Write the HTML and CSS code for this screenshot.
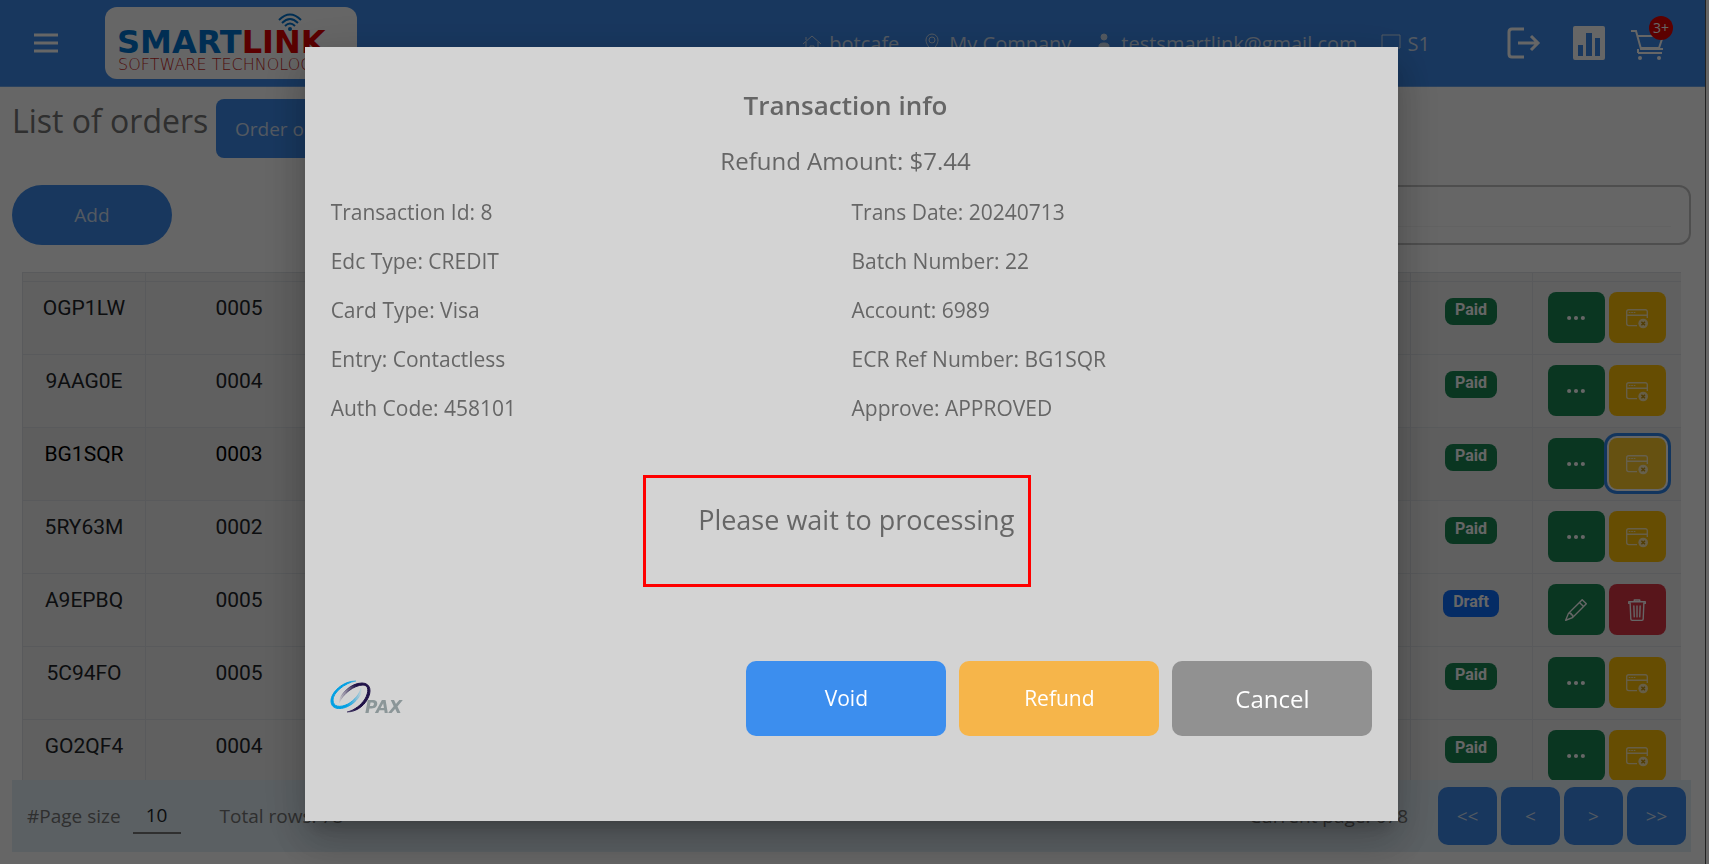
FILE: index.html
```
<!DOCTYPE html>
<html lang="en">

<head>
    <meta charset="UTF-8">
    <meta name="viewport" content="width=device-width, initial-scale=1.0">
    <title>List of orders</title>
    <link rel="stylesheet" href="styles.css">
</head>

<body>
    <!-- shared icons -->
    <svg class="sprite" aria-hidden="true">
        <symbol id="dots" viewBox="0 0 16 16">
            <path fill="currentColor" d="M3 9.5a1.5 1.5 0 1 1 0-3 1.5 1.5 0 0 1 0 3m5 0a1.5 1.5 0 1 1 0-3 1.5 1.5 0 0 1 0 3m5 0a1.5 1.5 0 1 1 0-3 1.5 1.5 0 0 1 0 3" />
        </symbol>
        <symbol id="window-x" viewBox="0 0 16 16">
            <path fill="none" stroke="currentColor" d="M8 13.5H2a1.5 1.5 0 0 1-1.500-1.500V3.500A1.500 1.500 0 0 1 2 2h12a1.500 1.500 0 0 1 1.500 1.500V8M.5 6h15" />
            <path fill="none" stroke="currentColor" stroke-width=".8" d="M2 4h5" stroke-dasharray="1.200 .6" />
            <circle cx="12.500" cy="12" r="3.500" fill="currentColor" />
            <path fill="none" stroke="#b8860b" stroke-width="1.100" d="m11.200 10.700 2.600 2.600m0-2.600-2.600 2.600" />
        </symbol>
        <symbol id="pencil" viewBox="0 0 16 16">
            <path fill="currentColor" d="M12.146.146a.5.5 0 0 1 .708 0l3 3a.5.5 0 0 1 0 .708l-10 10a.5.5 0 0 1-.168.11l-5 2a.5.5 0 0 1-.65-.65l2-5a.5.5 0 0 1 .11-.168zM11.207 2.5 13.5 4.793 14.793 3.5 12.5 1.207zm1.586 3L10.5 3.207 4 9.707V10h.5a.5.5 0 0 1 .5.5v.5h.5a.5.5 0 0 1 .5.5v.5h.293zm-9.761 5.175-.106.106-1.528 3.821 3.821-1.528.106-.106A.5.5 0 0 1 5 12.5V12h-.5a.5.5 0 0 1-.5-.5V11h-.5a.5.5 0 0 1-.468-.325" />
        </symbol>
        <symbol id="trash" viewBox="0 0 16 16">
            <path fill="none" stroke="currentColor" stroke-linecap="round" stroke-linejoin="round" d="M2 3.200V2h12v1.200M6 2V.7h4V2M3 3l.5 11.500a1 1 0 0 0 1 1h7a1 1 0 0 0 1-1L13 3M5.700 5l.3 8M8 5v8M10.300 5l-.3 8" />
        </symbol>
    </svg>

    <div class="app">
        <header class="topbar">
            <button class="icon-btn menu" aria-label="Menu">
                <svg width="26" height="20" viewBox="0 0 26 20"><path stroke="currentColor" stroke-width="3" d="M1 2h24M1 10h24M1 18h24" /></svg>
            </button>
            <a href="#" class="logo" aria-label="Smartlink">
                <svg width="252" height="72" viewBox="0 0 252 72">
                    <g fill="none" stroke="#0073cf" stroke-width="2">
                        <path d="M174 13q11-11 22 0M177 16q8-8 16 0M180 19q5-5 10 0" />
                    </g>
                    <circle cx="185" cy="22" r="2" fill="#0073cf" />
                    <text x="12" y="46" class="logo-name"><tspan fill="#0073cf">SMART</tspan><tspan fill="#e30000">LINK</tspan></text>
                    <text x="13" y="63" class="logo-sub">SOFTWARE TECHNOLOGY</text>
                </svg>
            </a>
            <nav class="info">
                <a href="#"><svg width="20" height="20" viewBox="0 0 20 20"><path d="M1 11 10 3l9 8M4 9v9h4v-5h4v5h4V9M4 7V4" /></svg>botcafe</a>
                <a href="#"><svg width="20" height="20" viewBox="0 0 20 20"><path d="M10 19C7 14 4 11 4 7a6 6 0 0 1 12 0c0 4-3 7-6 12z" /><circle cx="10" cy="7" r="3" /></svg>My Company</a>
                <a href="#"><svg width="20" height="20" viewBox="0 0 20 20"><g fill="currentColor"><circle cx="10" cy="4" r="3" /><path d="M5 17v-4q0-3 5-3t5 3v4z" /></g></svg>testsmartlink@gmail.com</a>
                <a href="#"><svg width="20" height="20" viewBox="0 0 20 20"><path d="M1 2h18v13H1zM7 18h6" /></svg>S1</a>
            </nav>
            <div class="tools">
                <button class="icon-btn" aria-label="Log out">
                    <svg width="34" height="34" viewBox="0 0 34 34" fill="none" stroke="currentColor" stroke-width="3"><path d="M17 3H5Q2 3 2 6v22q0 3 3 3h12M11 17h20M24 10l7 7-7 7" /></svg>
                </button>
                <button class="icon-btn" aria-label="Reports">
                    <svg width="32" height="34" viewBox="0 0 32 34"><path fill="currentColor" fill-rule="evenodd" d="M2 0h28q2 0 2 2v30q0 2-2 2H2q-2 0-2-2V2q0-2 2-2zM5 19v11h5V19zM13 7v23h6V7zM22 12v18h5V12z" /></svg>
                </button>
                <button class="icon-btn cart" aria-label="Cart">
                    <svg width="34" height="34" viewBox="0 0 34 34" fill="none" stroke="currentColor" stroke-width="2"><path d="M0 5h5l5 18h22M7 10h25l-4 12H10M7 27h24M7 23v4" /><g fill="currentColor" stroke="none"><circle cx="9" cy="32" r="2" /><circle cx="28" cy="32" r="2" /></g></svg>
                    <span class="count">3+</span>
                </button>
            </div>
        </header>

        <main class="content">
            <div class="heading">
                <h1>List of orders</h1>
                <button class="btn order-btn">Order online</button>
            </div>
            <div class="toolbar">
                <button class="btn add-btn">Add</button>
                <div class="search"><input type="text" aria-label="Search orders"></div>
            </div>

            <div class="table-wrap">
                <table class="orders">
                    <colgroup>
                        <col class="col-id">
                        <col class="col-number">
                        <col>
                        <col class="col-status">
                        <col class="col-actions">
                    </colgroup>
                    <thead>
                        <tr><th></th><th></th><th></th><th></th><th></th></tr>
                    </thead>
                    <tbody>
                        <tr>
                            <td>OGP1LW</td><td>0005</td><td></td>
                            <td><span class="badge paid">Paid</span></td>
                            <td><div class="actions"><button class="act green" aria-label="More"><svg><use href="#dots" /></svg></button><button class="act yellow" aria-label="Refund"><svg><use href="#window-x" /></svg></button></div></td>
                        </tr>
                        <tr>
                            <td>9AAG0E</td><td>0004</td><td></td>
                            <td><span class="badge paid">Paid</span></td>
                            <td><div class="actions"><button class="act green" aria-label="More"><svg><use href="#dots" /></svg></button><button class="act yellow" aria-label="Refund"><svg><use href="#window-x" /></svg></button></div></td>
                        </tr>
                        <tr class="selected">
                            <td>BG1SQR</td><td>0003</td><td></td>
                            <td><span class="badge paid">Paid</span></td>
                            <td><div class="actions"><button class="act green" aria-label="More"><svg><use href="#dots" /></svg></button><button class="act yellow active" aria-label="Refund"><svg><use href="#window-x" /></svg></button></div></td>
                        </tr>
                        <tr>
                            <td>5RY63M</td><td>0002</td><td></td>
                            <td><span class="badge paid">Paid</span></td>
                            <td><div class="actions"><button class="act green" aria-label="More"><svg><use href="#dots" /></svg></button><button class="act yellow" aria-label="Refund"><svg><use href="#window-x" /></svg></button></div></td>
                        </tr>
                        <tr>
                            <td>A9EPBQ</td><td>0005</td><td></td>
                            <td><span class="badge draft">Draft</span></td>
                            <td><div class="actions"><button class="act green" aria-label="Edit"><svg><use href="#pencil" /></svg></button><button class="act red" aria-label="Delete"><svg><use href="#trash" /></svg></button></div></td>
                        </tr>
                        <tr>
                            <td>5C94FO</td><td>0005</td><td></td>
                            <td><span class="badge paid">Paid</span></td>
                            <td><div class="actions"><button class="act green" aria-label="More"><svg><use href="#dots" /></svg></button><button class="act yellow" aria-label="Refund"><svg><use href="#window-x" /></svg></button></div></td>
                        </tr>
                        <tr>
                            <td>GO2QF4</td><td>0004</td><td></td>
                            <td><span class="badge paid">Paid</span></td>
                            <td><div class="actions"><button class="act green" aria-label="More"><svg><use href="#dots" /></svg></button><button class="act yellow" aria-label="Refund"><svg><use href="#window-x" /></svg></button></div></td>
                        </tr>
                    </tbody>
                </table>
            </div>

            <footer class="pager">
                <label for="pageSize">#Page size</label>
                <input type="text" id="pageSize" value="10">
                <span class="total">Total rows: 78</span>
                <span class="current">Current page: 678</span>
                <div class="pages">
                    <button class="btn">&lt;&lt;</button>
                    <button class="btn">&lt;</button>
                    <button class="btn">&gt;</button>
                    <button class="btn">&gt;&gt;</button>
                </div>
            </footer>
        </main>
    </div>

    <div class="overlay">
        <section class="modal" role="dialog" aria-modal="true" aria-labelledby="modalTitle">
            <h2 id="modalTitle">Transaction info</h2>
            <p class="amount">Refund Amount: $7.44</p>
            <div class="details">
                <span>Transaction Id: 8</span>
                <span>Trans Date: 20240713</span>
                <span>Edc Type: CREDIT</span>
                <span>Batch Number: 22</span>
                <span>Card Type: Visa</span>
                <span>Account: 6989</span>
                <span>Entry: Contactless</span>
                <span>ECR Ref Number: BG1SQR</span>
                <span>Auth Code: 458101</span>
                <span>Approve: APPROVED</span>
            </div>
            <p class="waiting">Please wait to processing</p>
            <div class="modal-footer">
                <svg class="pax" width="80" height="38" viewBox="0 0 80 38" role="img" aria-label="PAX">
                    <defs>
                        <linearGradient id="cyan" x1="0" y1="0" x2="1" y2="0">
                            <stop offset=".5" stop-color="#009fe3" />
                            <stop offset="1" stop-color="#009fe3" stop-opacity="0" />
                        </linearGradient>
                        <linearGradient id="navy" x1="1" y1="0" x2="0" y2="0">
                            <stop offset=".45" stop-color="#1f1147" />
                            <stop offset="1" stop-color="#1f1147" stop-opacity="0" />
                        </linearGradient>
                    </defs>
                    <path fill="url(#cyan)" stroke="url(#cyan)" d="M25 2C12 2 0 13 0 22c0 12 19 9 28-4 4-6 3-9 2-9-1 5-6 12-13 16C9 29 2 28 2 21 2 14 13 4 25 2z" />
                    <path fill="url(#navy)" stroke="url(#navy)" d="M8 24C8 15 20 4 31 4c9 0 10 9 5 17-4 7-12 12-20 12 8-2 14-7 18-13 4-7 4-14-2-14C23 6 12 15 8 24z" />
                    <text x="34" y="34">PAX</text>
                </svg>
                <button class="modal-btn void">Void</button>
                <button class="modal-btn refund">Refund</button>
                <button class="modal-btn cancel">Cancel</button>
            </div>
        </section>
    </div>
</body>

</html>
```
FILE: styles.css
```
* {
    box-sizing: border-box;
}

body {
    margin: 0;
    background: #fff;
    color: #757575;
    font-family: "Open Sans", "Noto Sans", sans-serif;
    font-size: 19px;
    overflow: hidden;
}

button,
input {
    font-family: inherit;
    font-size: inherit;
}

button {
    border: none;
    padding: 0;
    cursor: pointer;
}

.sprite {
    position: absolute;
    width: 0;
    height: 0;
}

.app {
    display: flex;
    flex-direction: column;
    height: 100vh;
    margin-right: 3px;
    border-right: 1px solid #555;
}

/* top bar */
.topbar {
    display: flex;
    align-items: center;
    height: 87px;
    padding: 0 40px 0 33px;
    background: #3d8bec;
    border-bottom: 1px solid #6aa5ee;
    color: #fff;
}

.icon-btn {
    display: flex;
    position: relative;
    background: none;
    color: #fff;
}

.logo {
    display: flex;
    margin: 0 auto 0 46px;
    background: #fff;
    border-radius: 12px;
}

.logo-name {
    font: bold 32px "DejaVu Sans", sans-serif;
}

.logo-sub {
    font: 200 16px "DejaVu Sans", sans-serif;
    fill: #c61f24;
}

.info {
    display: flex;
    gap: 23px;
    font-size: 20px;
}

.info a {
    display: flex;
    align-items: center;
    gap: 7px;
    color: #d0dff2;
    text-decoration: none;
}

.info svg {
    fill: none;
    stroke: currentColor;
}

.tools {
    display: flex;
    align-items: center;
    gap: 32px;
    margin-left: 77px;
}

.cart {
    margin-left: -6px;
}

.count {
    position: absolute;
    top: -10px;
    right: -8px;
    width: 24px;
    height: 24px;
    border-radius: 50%;
    background: #e60000;
    font-size: 14px;
    line-height: 24px;
}

/* page content */
.content {
    display: flex;
    flex-direction: column;
    flex: 1;
    min-height: 0;
    padding: 12px 14px 12px 12px;
}

.heading {
    display: flex;
    gap: 8px;
}

h1 {
    margin: 0;
    font-size: 32px;
    font-weight: 500;
    line-height: 44px;
}

.btn {
    background: #3d8bec;
    color: #d0dff2;
}

.order-btn {
    width: 150px;
    height: 59px;
    border-radius: 8px;
}

.toolbar {
    display: flex;
    justify-content: space-between;
    margin-top: 27px;
}

.add-btn {
    width: 160px;
    height: 60px;
    border-radius: 30px;
}

.search {
    width: 50%;
    padding: 0 18px 16px;
    border: 2px solid #c4c4c4;
    border-radius: 12px;
}

.search input {
    width: 100%;
    height: 100%;
    border: none;
    border-bottom: 1px solid #f4f4f4;
    background: none;
}

/* orders table */
.table-wrap {
    flex: 1;
    min-height: 0;
    margin: 27px 10px 0;
    overflow: hidden;
}

.orders {
    width: 100%;
    table-layout: fixed;
    border-collapse: collapse;
    background: #f0f0f0;
    color: #212529;
    font-family: Roboto, sans-serif;
    font-size: 21px;
    text-align: center;
}

.col-id {
    width: 123px;
}

.col-number {
    width: 187px;
}

.col-status {
    width: 122px;
}

.col-actions {
    width: 149px;
}

.orders th {
    height: 9px;
    padding: 0;
}

.orders th,
.orders td {
    border: 1px solid #dee2e6;
    border-right: none;
}

.orders td {
    height: 73px;
    padding: 14px 0 0;
    line-height: 25px;
    vertical-align: top;
}

.orders .selected {
    background: #ececec;
    color: #000;
}

.badge {
    display: inline-block;
    padding: 0 10px 3px;
    border-radius: 8px;
    color: #fff;
    font-size: 16px;
    font-weight: bold;
    line-height: 24px;
}

.paid {
    background: #198754;
}

.draft {
    background: #0d6efd;
}

.orders td:last-child {
    padding-top: 10px;
}

.actions {
    display: flex;
    justify-content: center;
    gap: 4px;
}

.act {
    display: flex;
    align-items: center;
    justify-content: center;
    width: 57px;
    height: 51px;
    border-radius: 8px;
    color: #fff;
}

.act svg {
    width: 22px;
    height: 22px;
}

.green {
    background: #198754;
}

.yellow {
    background: #ffc107;
}

.yellow svg {
    opacity: 0.7;
}

.red {
    background: #dc3545;
}

.yellow.active {
    background: #ffca2c;
    box-shadow: 0 0 0 2px #fff, 0 0 0 5px #2f86ea;
}

/* pager */
.pager {
    display: flex;
    align-items: center;
    height: 72px;
    padding: 0 5px 0 15px;
    background: #e4f0f8;
}

.pager input {
    width: 48px;
    height: 36px;
    margin: 0 39px 0 12px;
    border: none;
    border-bottom: 2px solid #757575;
    background: none;
    color: #212529;
    text-align: center;
}

.current {
    margin-left: auto;
}

.pages {
    display: flex;
    gap: 4px;
    margin-left: 30px;
}

.pages .btn {
    width: 59px;
    height: 58px;
    border-radius: 10px;
}

/* transaction dialog */
.overlay {
    position: fixed;
    inset: 0;
    display: flex;
    align-items: center;
    justify-content: center;
    padding: 3px 6px 0 0;
    background: rgba(0, 0, 0, 0.6);
}

.modal {
    width: 64vw;
    padding: 39px 26px 85px;
    background: #d3d3d3;
    box-shadow: 0 11px 15px -7px rgba(0, 0, 0, 0.2), 0 24px 38px 3px rgba(0, 0, 0, 0.14), 0 9px 46px 8px rgba(0, 0, 0, 0.12);
    color: #666;
}

.modal h2,
.amount {
    margin: 0;
    padding-right: 12px;
    text-align: center;
}

.modal h2 {
    font-size: 26px;
    font-weight: 600;
    line-height: 38px;
}

.amount {
    margin-top: 20px;
    font-size: 24px;
    line-height: 34px;
}

.details {
    display: grid;
    grid-template-columns: 1fr 1fr;
    margin-top: 10px;
    font-size: 21px;
    line-height: 49px;
}

.waiting {
    width: 388px;
    margin: 42px auto 0 30%;
    padding: 23px 14px 45px 52px;
    border: 3px solid #f00;
    font-size: 27px;
    line-height: 38px;
    white-space: nowrap;
}

.modal-footer {
    display: flex;
    align-items: center;
    gap: 13px;
    margin-top: 74px;
}

.pax {
    margin-right: auto;
    overflow: visible;
}

.pax text {
    font: italic bold 17px "DejaVu Sans", sans-serif;
    fill: #8b9698;
}

.modal-btn {
    width: 200px;
    height: 75px;
    border-radius: 10px;
    color: #fff;
    font-size: 21px;
}

.void {
    background: #3c8eee;
}

.refund {
    background: #f6b54a;
}

.cancel {
    background: #919191;
    font-size: 24px;
}
```
